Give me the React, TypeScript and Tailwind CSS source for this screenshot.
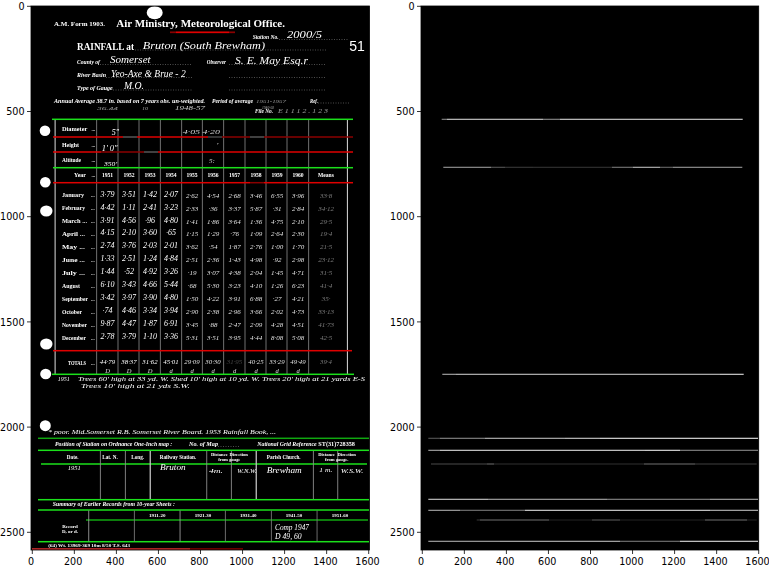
const XT = [0, 200, 400, 600, 800, 1000, 1200, 1400, 1600]
const YT = [0, 500, 1000, 1500, 2000, 2500]

const FONT = {
  print: "font-['Liberation_Serif'] font-bold",
  ital: "font-['Liberation_Serif'] font-bold italic",
  hand: "font-['Liberation_Serif'] italic",
}

interface TProps {
  x: number
  y: number
  w?: number
  s?: number
  k?: keyof typeof FONT
  o?: number
  mid?: boolean
  children: string
}

// w stretches the string to the width measured on the reference
function T({ x, y, w, s = 5.5, k = 'print', o = 1, mid, children }: TProps) {
  return (
    <text
      x={x}
      y={y}
      fontSize={s}
      fill="#fff"
      opacity={o}
      textAnchor={mid ? 'middle' : 'start'}
      textLength={w}
      lengthAdjust={w ? 'spacingAndGlyphs' : undefined}
      className={FONT[k]}
    >
      {children}
    </text>
  )
}

type Seg = [number, number, string]

function Line({ y, segs, h = 1.5 }: { y: number; segs: Seg[]; h?: number }) {
  return (
    <>
      {segs.map(([a, b, c]) => (
        <rect key={a} x={a} y={y - h / 2} width={b - a} height={h} fill={c} />
      ))}
    </>
  )
}

function Dots({ y, a, b }: { y: number; a: number; b: number }) {
  return <line x1={a} x2={b} y1={y} y2={y} stroke="#9a9a9a" strokeWidth={0.5} strokeDasharray="1 1.5" />
}

function Axes({ left, right }: { left: number; right: number }) {
  const x0 = left + 1.3
  return (
    <g>
      {XT.map((v, i) => {
        const x = x0 + i * 42.05
        return (
          <g key={v}>
            <line x1={x} x2={x} y1={550} y2={554} stroke="#000" strokeWidth={0.8} />
            <text x={x - 1.2} y={565} fontSize={9.6} textAnchor="middle" className="font-['DejaVu_Sans']">
              {v}
            </text>
          </g>
        )
      })}
      {YT.map((v, i) => {
        const y = 6.3 + i * 105.2
        return (
          <g key={v}>
            <line x1={left - 4} x2={left} y1={y} y2={y} stroke="#000" strokeWidth={0.8} />
            <text x={left - 6.5} y={y + 3.6} fontSize={9.6} textAnchor="end" className="font-['DejaVu_Sans']">
              {v}
            </text>
          </g>
        )
      })}
      <rect x={left} y={6} width={right - left} height={544} fill="none" stroke="#000" strokeWidth={0.8} />
    </g>
  )
}

const G = '#1be01b'
const GD = '#10a810'
const R = '#e00000'
const RD = '#8a0000'

const V1 = [55, 96.7, 118, 139, 160.3, 181.7, 202.3, 223.7, 245, 266, 287, 308.7, 347.3]
const V2 = [100.3, 125.3, 150, 206.7, 231.3, 256, 313.3, 337.7]
const V3 = [88.7, 134.3, 180, 225.3, 271.3, 317]
const COL = [107.5, 129, 150, 171, 192, 213, 234.5, 256, 277, 298, 326]
const YEARS = ['1951', '1952', '1953', '1954', '1955', '1956', '1957', '1958', '1959', '1960', 'Means']

const MONTHS: [string, number, string[]][] = [
  ['January', 22, ['3·79', '3·51', '1·42', '2·07', '2·62', '4·54', '2·68', '3·46', '6·55', '3·96', '33·8']],
  ['February', 23, ['4·42', '1·11', '2·41', '3·23', '2·33', '·36', '3·37', '5·87', '·31', '2·84', '34·12']],
  ['March ...', 25, ['3·91', '4·56', '·96', '4·80', '1·41', '1·86', '3·64', '1·36', '4·75', '2·10', '29·5']],
  ['April ...', 23, ['4·15', '2·10', '3·60', '·65', '1·15', '1·29', '·76', '1·09', '2·64', '2·30', '19·4']],
  ['May ...', 23, ['2·74', '3·76', '2·03', '2·01', '3·62', '·54', '1·87', '2·76', '1·00', '1·70', '21·5']],
  ['June ...', 23, ['1·33', '2·51', '1·24', '4·84', '2·51', '2·36', '1·43', '4·98', '·92', '2·98', '23·12']],
  ['July ...', 23, ['1·44', '·52', '4·92', '3·26', '·19', '3·07', '4·38', '2·04', '1·45', '4·71', '31·5']],
  ['August', 18, ['6·10', '3·43', '4·66', '5·44', '·68', '5·30', '3·23', '4·10', '1·26', '6·23', '41·4']],
  ['September', 26, ['3·42', '3·97', '3·90', '4·80', '1·50', '4·22', '3·91', '6·88', '·27', '4·21', '35·']],
  ['October', 20, ['·74', '4·46', '3·34', '3·94', '2·90', '2·38', '2·96', '3·66', '2·02', '4·73', '33·13']],
  ['November', 25, ['9·87', '4·47', '1·87', '6·91', '3·45', '·88', '2·47', '2·09', '4·28', '4·51', '41·73']],
  ['December', 24, ['2·78', '3·79', '1·10', '3·36', '5·31', '3·51', '3·95', '4·44', '8·08', '5·08', '42·5']],
]
const TOTALS = ['44·79', '38·37', '31·62', '45·01', '29·09', '30·30', '31·95', '40·25', '33·29', '49·49', '39·4']
const FLAGS = ['D', 'D', 'D', 'd', 'd', 'd', 'd', 'd', 'd', 'd']

const bright = (i: number) => (i < 4 ? 1 : i < 10 ? 0.88 : 0.45)

function Scan() {
  return (
    <g className="blur-[0.2px]">
      {[
        [154.7, 12.7, 8, 6.5],
        [45, 130.7, 5.3, 5.3],
        [45.3, 182.3, 5.3, 5.3],
        [46.3, 211, 6.2, 5.6],
        [46.3, 344, 6.2, 5.6],
        [45.7, 374, 5.5, 5.3],
        [45.3, 425.7, 5.5, 5.5],
      ].map(([cx, cy, rx, ry]) => (
        <ellipse key={cy} cx={cx} cy={cy} rx={rx} ry={ry} fill="#fff" />
      ))}

      <T x={54} y={25.5} w={51} s={6.8}>A.M. Form 1903.</T>
      <T x={116.3} y={27} w={168.7} s={10.5}>Air Ministry, Meteorological Office.</T>
      <Line y={32.3} h={1.7} segs={[[170, 176, RD], [176, 229, R], [229, 235, RD]]} />

      <T x={252.7} y={39} w={26} k="ital" s={5.6}>Station No.</T>
      <Dots y={39.5} a={279} b={349} />
      <T x={287} y={38} w={35} k="hand" s={11}>2000/5</T>

      <T x={77} y={49.7} w={57} s={9.5}>RAINFALL at</T>
      <Dots y={50} a={135} b={326} />
      <T x={142.7} y={49.3} w={122.3} k="hand" s={11}>Bruton (South Brewham)</T>
      <text x={349.3} y={50.7} fontSize={14} fill="#fff" className="font-['Liberation_Sans']">51</text>

      <T x={77} y={64} w={23} k="ital" s={5.6}>County of</T>
      <Dots y={64.5} a={100} b={192} />
      <T x={110} y={63.3} w={40.7} k="hand" s={10}>Somerset</T>
      <T x={206.7} y={64} w={19.3} k="ital" s={5.6}>Observer</T>
      <Dots y={64.5} a={229} b={326} />
      <T x={235} y={63.5} w={73} k="hand" s={10.5}>S. E. May Esq.r</T>

      <T x={77} y={77} w={29} k="ital" s={5.6}>River Basin</T>
      <Dots y={77.5} a={106} b={192} />
      <T x={111} y={76.7} w={74.7} k="hand" s={10}>Yeo-Axe & Brue - 2</T>
      <Dots y={77.5} a={229} b={326} />

      <T x={77} y={90} w={35.7} k="ital" s={5.6}>Type of Gauge</T>
      <Dots y={90} a={113} b={192} />
      <T x={124} y={89} w={20} k="hand" s={9.5}>M.O.</T>
      <Dots y={90} a={229} b={326} />

      <T x={54} y={102.7} w={151} k="ital" s={5.6}>Annual Average 38.7 in. based on 7 years obs. un-weighted.</T>
      <T x={212} y={102.7} w={41} k="ital" s={5.6}>Period of average</T>
      <T x={256} y={102.7} w={30} k="hand" s={5} o={0.55}>1951-1957</T>
      <T x={310} y={102.7} w={8} k="ital" s={5.6}>Ref.</T>
      <Dots y={103} a={318} b={349} />
      <T x={97} y={109.5} w={21} k="hand" s={5} o={0.6}>36.44</T>
      <T x={142} y={109.5} w={6} k="hand" s={5} o={0.6}>10</T>
      <T x={175} y={109.5} w={30} k="hand" s={5.5} o={0.8}>1948-57</T>
      <T x={262} y={108.5} w={12} k="hand" s={4.5} o={0.6}>1946-58</T>
      <T x={255} y={113.3} w={18} k="ital" s={5.6}>File No.</T>
      <T x={278} y={113.3} w={50} k="hand" s={5.5} o={0.6}>E 1 1 1 2 . 1 2 3</T>

      {V1.map((x) => (
        <rect key={x} x={x - 0.4} y={119} width={x === 55 || x === 347.3 ? 1 : 0.8} height={255} fill={x === 55 || x === 347.3 ? '#dcdcdc' : '#8c8c8c'} />
      ))}

      <Line y={119.3} segs={[[52, 353, G]]} />
      <Line y={137} segs={[[53, 123, R], [123, 137, '#555'], [137, 208, R], [208, 222, '#444'], [222, 250, RD], [250, 264, '#555'], [264, 353, RD]]} />
      <Line y={152} segs={[[53, 101, R], [101, 144, RD], [144, 158, '#555'], [158, 353, R]]} />
      <Line y={167.7} segs={[[53, 353, G]]} />
      <Line y={182.7} segs={[[53, 250, R], [250, 264, RD], [264, 353, R]]} />
      <Line y={350.7} segs={[[53, 352, R]]} />
      <Line y={374.3} segs={[[52, 354, G]]} />
      <Line y={438.3} segs={[[38, 369, GD]]} />
      <Line y={450.3} segs={[[38, 369, G]]} />
      <Line y={464} segs={[[41, 367, G]]} />
      <Line y={499.7} segs={[[38, 369, G]]} />
      <Line y={510} segs={[[38, 369, G]]} />
      <Line y={520} segs={[[86, 368, GD]]} />
      <Line y={541.7} segs={[[38, 369, G]]} />
      <Line y={549} h={1.5} segs={[[32, 190, '#e03030'], [190, 243, RD]]} />

      <T x={62} y={131.3} w={25.3} s={6}>Diameter</T>
      <T x={62} y={146.7} w={17} s={6}>Height</T>
      <T x={62} y={161.7} w={19} s={6}>Altitude</T>
      {[131.3, 146.7, 161.7, 176.7].map((y) => (
        <T key={y} x={91.5} y={y} s={5}>...</T>
      ))}
      <T x={111.7} y={135} k="hand" s={8}>5"</T>
      <T x={101.7} y={150.7} w={16} k="hand" s={7.5}>1' 0"</T>
      <T x={104} y={166} w={13} k="hand" s={7}>350'</T>
      <T x={182.7} y={134} w={37.3} k="hand" s={7} o={0.8}>4·05 4·20</T>
      <T x={216.7} y={146.7} k="hand" s={7}>'</T>
      <T x={209} y={163} k="hand" s={7} o={0.8}>5:</T>

      <T x={74} y={176.7} w={12} s={5.8}>Year</T>
      {YEARS.map((y, i) => (
        <T key={y} x={COL[i]} y={176.7} s={5.6} mid>{y}</T>
      ))}

      {MONTHS.map(([name, w, vals], r) => {
        const y = 197.3 + r * 12.93
        return (
          <g key={name}>
            <T x={62} y={y} w={w} s={6}>{name}</T>
            <T x={91} y={y} s={5}>...</T>
            {vals.map((v, i) => (
              <T key={i} x={COL[i]} y={y + (i < 4 ? -0.6 : 0.4)} k="hand" s={i < 4 ? 8 : 7} o={bright(i)} mid>{v}</T>
            ))}
          </g>
        )
      })}

      <T x={68} y={364.5} w={18} s={5.4}>TOTALS</T>
      <T x={91} y={364.5} s={5}>...</T>
      {TOTALS.map((v, i) => (
        <T key={i} x={COL[i]} y={363.5} k="hand" s={6.8} o={i === 6 ? 0.25 : bright(i)} mid>{v}</T>
      ))}
      {FLAGS.map((v, i) => (
        <T key={i} x={COL[i]} y={372.5} k="hand" s={6.5} o={0.85} mid>{v}</T>
      ))}

      <T x={57.7} y={380.7} w={12} k="hand" s={6}>1951</T>
      <T x={78} y={380.7} w={287} k="hand" s={6.5}>Trees 60' high at 33 yd. W. Shed 10' high at 10 yd. W. Trees 20' high at 21 yards E-S</T>
      <T x={81} y={387.5} w={109} k="hand" s={6.5}>Trees 10' high at 21 yds S.W.</T>
      <T x={48} y={434} w={228} k="hand" s={6.5}>* poor. Mid.Somerset R.B. Somerset River Board. 1953 Rainfall Book, ...</T>

      <T x={55} y={446.3} w={117.3} k="ital" s={6}>Position of Station on Ordnance One-Inch map :</T>
      <T x={189} y={446.3} w={29} k="ital" s={6}>No. of Map</T>
      <Dots y={446.5} a={218} b={240} />
      <T x={257.3} y={446.3} w={59.4} k="ital" s={6}>National Grid Reference</T>
      <T x={318.3} y={446} w={36.7} s={6}>ST(31)728358</T>

      {V2.map((x) => (
        <rect key={x} x={x - 0.4} y={451} width={x === 150 || x === 256 ? 1.3 : 0.9} height={48} fill={x === 150 || x === 256 ? '#c0c0c0' : '#8c8c8c'} />
      ))}
      <T x={72.7} y={459.3} s={5.2} mid>Date.</T>
      <T x={110} y={459.3} s={5.2} mid>Lat. N.</T>
      <T x={137.7} y={459.3} s={5.2} mid>Long.</T>
      <T x={178} y={459.3} s={5.2} mid>Railway Station.</T>
      <T x={219.3} y={455.7} s={4.6} mid>Distance</T>
      <T x={238.7} y={455.7} s={4.6} mid>Direction</T>
      <T x={229.3} y={460.5} s={4.6} mid>from gauge</T>
      <T x={283.7} y={459.3} s={5.2} mid>Parish Church.</T>
      <T x={326.7} y={455.7} s={4.6} mid>Distance</T>
      <T x={346.7} y={455.7} s={4.6} mid>Direction</T>
      <T x={336.7} y={460.5} s={4.6} mid>from gauge.</T>

      <T x={67.7} y={470} w={13} k="hand" s={7}>1951</T>
      <T x={160} y={470} w={25.7} k="hand" s={8.5}>Bruton</T>
      <T x={209} y={473} w={14} k="hand" s={7}>4m.</T>
      <T x={237.3} y={472.5} w={19.4} k="hand" s={6.5}>W.N.W.</T>
      <T x={266.7} y={473} w={35} k="hand" s={8.5}>Brewham</T>
      <T x={319.3} y={472} w={13} k="hand" s={7}>1 m.</T>
      <T x={340.7} y={473} w={22.6} k="hand" s={6.5}>W.S.W.</T>

      <T x={52.7} y={506} w={122.3} k="ital" s={6}>Summary of Earlier Records from 10-year Sheets :</T>

      {V3.map((x) => (
        <rect key={x} x={x - 0.4} y={510.5} width={0.9} height={31} fill={x === 88.7 || x === 180 ? '#999' : '#777'} />
      ))}
      {[['1911-20', 157.3], ['1921-30', 203], ['1931-40', 248.3], ['1941-50', 294], ['1951-60', 340]].map(([t, x]) => (
        <T key={t} x={x as number} y={517} s={5} mid>{t as string}</T>
      ))}
      <T x={70} y={527.5} s={5} mid>Record</T>
      <T x={70} y={532.5} s={5} mid>D, or d.</T>
      <T x={275} y={530} w={34} k="hand" s={8}>Comp 1947</T>
      <T x={275} y={539.3} w={26.7} k="hand" s={7.5}>D 49, 60</T>
      <T x={48.3} y={546.7} w={81.7} s={4.2}>(64) Wt. 13969-369 10m 8/50 T.S. 643</T>
    </g>
  )
}

const MASKS: [number, Seg[]][] = [
  [119.3, [[441.7, 447, '#888'], [447, 543, '#d0d0d0'], [543, 560, '#8a8a8a'], [560, 742.7, '#d4d4d4']]],
  [167.3, [[443.3, 491, '#999'], [491, 505, '#555'], [505, 533, '#383838'], [533, 612, '#333'], [612, 633, '#777'], [633, 660, '#bbb'], [660, 673, '#666'], [673, 742.3, '#999']]],
  [374.3, [[442.3, 456, '#aaa'], [456, 720, '#c4c4c4'], [720, 743.7, '#ddd']]],
  [438.3, [[428.3, 440, '#555'], [440, 485, '#888'], [485, 565, '#bbb'], [565, 600, '#ccc'], [600, 758, '#e8e8e8']]],
  [450.3, [[428.3, 440, '#aaa'], [440, 645, '#ddd'], [645, 680, '#e8e8e8'], [680, 758, '#888']]],
  [464, [[431, 487, '#444'], [487, 494, '#666'], [494, 644, '#2c2c2c'], [644, 695, '#666'], [695, 756.7, '#3a3a3a']]],
  [499.3, [[428.3, 488, '#ccc'], [488, 607, '#aaa'], [607, 710, '#888'], [710, 758, '#aaa']]],
  [510.3, [[428.3, 460, '#aaa'], [460, 525, '#777'], [525, 710, '#ddd'], [710, 758, '#bbb']]],
  [520, [[476.7, 480, '#333'], [480, 549, '#666'], [549, 592, '#222'], [592, 620, '#555'], [620, 705, '#222'], [705, 747, '#666'], [747, 756.7, '#222']]],
  [541.3, [[428.3, 500, '#aaa'], [500, 620, '#bbb'], [620, 680, '#777'], [680, 758, '#ddd']]],
]

export default function App() {
  return (
    <div className="flex h-[575px] w-[769px] bg-white text-black">
      <svg width={390} height={575} viewBox="0 0 390 575">
        <rect x={31} y={6} width={338.5} height={544} fill="#000" />
        <Scan />
        <Axes left={31} right={369.5} />
      </svg>
      <svg width={379} height={575} viewBox="390 0 379 575">
        <rect x={421} y={6} width={337.7} height={544} fill="#000" />
        {MASKS.map(([y, segs]) => (
          <Line key={y} y={y} h={1.1} segs={segs} />
        ))}
        <Axes left={421} right={758.7} />
      </svg>
    </div>
  )
}
